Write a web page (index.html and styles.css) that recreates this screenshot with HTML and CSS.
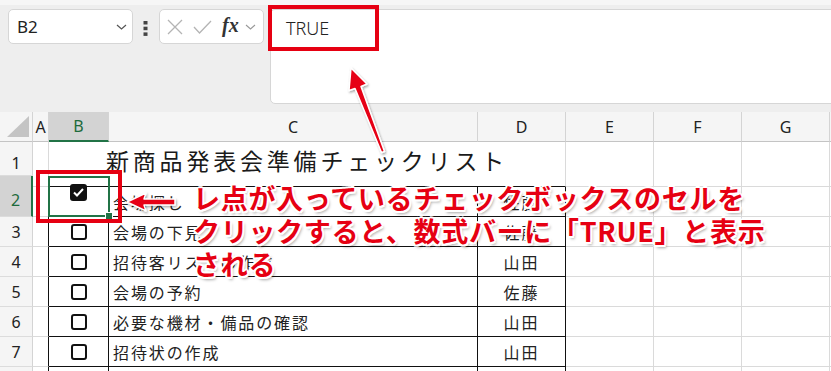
FILE: index.html
```html
<!DOCTYPE html>
<html lang="ja">
<head>
    <meta charset="UTF-8">
    <title>チェックボックス - 数式バー</title>
    <link rel="stylesheet" href="styles.css">
</head>
<body>
<div class="page">
    <div class="toolbar">
        <div class="namebox">
            <span>B2</span>
            <svg class="chev" width="11" height="6" viewBox="0 0 11 6"><path d="M1 1 L5.5 5 L10 1" fill="none" stroke="#555" stroke-width="1.2"/></svg>
        </div>
        <svg class="more" width="5" height="15" viewBox="0 0 5 15"><rect x="0.5" y="0" width="4" height="3.5" fill="#444"/><rect x="0.5" y="5.7" width="4" height="3.5" fill="#444"/><rect x="0.5" y="11.4" width="4" height="3.5" fill="#444"/></svg>
        <div class="fxbox">
            <svg width="16" height="16" viewBox="0 0 16 16"><path d="M1 1 L15 15 M15 1 L1 15" stroke="#b4b4b4" stroke-width="1.3" fill="none"/></svg>
            <svg width="19" height="14" viewBox="0 0 19 14"><path d="M1 7 L6.5 13 L18 1" stroke="#b4b4b4" stroke-width="1.3" fill="none"/></svg>
            <span class="fx">fx</span>
            <svg width="11" height="6" viewBox="0 0 11 6"><path d="M1 1 L5.5 5 L10 1" fill="none" stroke="#999" stroke-width="1.1"/></svg>
        </div>
        <div class="formula">TRUE</div>
    </div>

    <div class="sheet">
        <div class="rowheads">
            <div class="corner">
                <svg width="22" height="21" viewBox="0 0 22 21"><polygon points="22,0 22,21 0,21" fill="#c4c4c4"/></svg>
            </div>
            <div class="rh r1">1</div>
            <div class="rh r2 sel">2</div>
            <div class="rh">3</div>
            <div class="rh">4</div>
            <div class="rh">5</div>
            <div class="rh">6</div>
            <div class="rh">7</div>
            <div class="rh"></div>
        </div>

        <div class="grid">
            <div class="ch">A</div>
            <div class="ch sel">B</div>
            <div class="ch">C</div>
            <div class="ch">D</div>
            <div class="ch">E</div>
            <div class="ch">F</div>
            <div class="ch">G</div>
            <div class="ch"></div>

            <!-- row 1 -->
            <div class="c"></div>
            <div class="c title">新商品発表会準備チェックリスト</div>
            <div class="c"></div>
            <div class="c"></div>
            <div class="c"></div>
            <div class="c"></div>

            <!-- row 2 -->
            <div class="c edge"></div>
            <div class="c t box"><span class="cb on"><svg width="11" height="9" viewBox="0 0 11 9"><path d="M1 4.5 L4 7.5 L10 1" stroke="#fff" stroke-width="2" fill="none"/></svg></span></div>
            <div class="c t txt">会場探し</div>
            <div class="c t name">佐藤</div>
            <div class="c"></div><div class="c"></div><div class="c"></div><div class="c"></div>

            <!-- row 3 -->
            <div class="c edge"></div>
            <div class="c t box"><span class="cb"></span></div>
            <div class="c t txt">会場の下見</div>
            <div class="c t name">佐藤</div>
            <div class="c"></div><div class="c"></div><div class="c"></div><div class="c"></div>

            <!-- row 4 -->
            <div class="c edge"></div>
            <div class="c t box"><span class="cb"></span></div>
            <div class="c t txt">招待客リストの作成</div>
            <div class="c t name">山田</div>
            <div class="c"></div><div class="c"></div><div class="c"></div><div class="c"></div>

            <!-- row 5 -->
            <div class="c edge"></div>
            <div class="c t box"><span class="cb"></span></div>
            <div class="c t txt">会場の予約</div>
            <div class="c t name">佐藤</div>
            <div class="c"></div><div class="c"></div><div class="c"></div><div class="c"></div>

            <!-- row 6 -->
            <div class="c edge"></div>
            <div class="c t box"><span class="cb"></span></div>
            <div class="c t txt">必要な機材・備品の確認</div>
            <div class="c t name">山田</div>
            <div class="c"></div><div class="c"></div><div class="c"></div><div class="c"></div>

            <!-- row 7 -->
            <div class="c edge"></div>
            <div class="c t box"><span class="cb"></span></div>
            <div class="c t txt">招待状の作成</div>
            <div class="c t name">山田</div>
            <div class="c"></div><div class="c"></div><div class="c"></div><div class="c"></div>

            <!-- row 8 -->
            <div class="c edge"></div>
            <div class="c t"></div>
            <div class="c t"></div>
            <div class="c t"></div>
            <div class="c"></div><div class="c"></div><div class="c"></div><div class="c"></div>
        </div>
    </div>

    <!-- overlays -->
    <div class="selbox"><span class="handle"></span></div>
    <div class="redbox rb-formula"></div>
    <div class="redbox rb-cell"></div>

    <svg class="arrows" width="831" height="371" viewBox="0 0 831 371">
        <defs>
            <filter id="sh" x="-20%" y="-20%" width="140%" height="140%">
                <feDropShadow dx="1" dy="1.5" stdDeviation="1" flood-color="#000" flood-opacity="0.35"/>
            </filter>
        </defs>
        <g filter="url(#sh)" fill="#e60012" stroke="#fff" stroke-width="1.5" stroke-linejoin="round">
            <polygon points="127,202 146,193 144,199 175,199 175,205 144,205 146,211"/>
            <polygon points="351,68 367,84 361,86.5 384.5,151.5 381.5,152.5 355,88.5 349,90.5"/>
        </g>
    </svg>

    <div class="note">
        レ点が入っているチェックボックスのセルを<br>
        クリックすると、数式バーに「TRUE」と表示<br>
        される
    </div>
</div>
</body>
</html>
```

FILE: styles.css
```css
body {
    margin: 0;
    font-family: "Noto Sans", "Noto Sans CJK JP", sans-serif;
    color: #222;
}

.page {
    position: relative;
    width: 831px;
    height: 371px;
    overflow: hidden;
    background: #fff;
}

/* formula bar area */
.toolbar {
    height: 112px;
    box-sizing: border-box;
    display: flex;
    align-items: flex-start;
    background: #eeeeee;
    border-top: 5px solid #f6f6f6;
    padding-top: 4px;
}

.namebox {
    margin-left: 8px;
    width: 125px;
    height: 35px;
    box-sizing: border-box;
    background: #fff;
    border: 1px solid #d6d6d6;
    border-radius: 5px;
    display: flex;
    align-items: center;
    justify-content: space-between;
    padding: 0 5px 0 8px;
    font-size: 17px;
    color: #222;
}

.more {
    margin: 12px 11px 0 10px;
}

.fxbox {
    width: 105px;
    height: 35px;
    box-sizing: border-box;
    background: #fff;
    border: 1px solid #d6d6d6;
    border-radius: 5px;
    display: flex;
    align-items: center;
    gap: 10px;
    padding-left: 7px;
}

.fx {
    font-family: "Liberation Serif", serif;
    font-style: italic;
    font-weight: bold;
    font-size: 20px;
    color: #333;
    margin-right: -4px;
    margin-top: -3px;
}

.formula {
    flex: 1;
    margin-left: 6px;
    margin-right: -10px;
    height: 95px;
    box-sizing: border-box;
    background: #fff;
    border: 1px solid #d6d6d6;
    border-radius: 5px;
    padding: 6px 0 0 15px;
    font-size: 18px;
    font-weight: 300;
    color: #222;
}

/* sheet */
.sheet {
    display: flex;
}

.rowheads {
    width: 33px;
    flex: none;
    background: #f5f5f5;
}

.corner {
    height: 30px;
    box-sizing: border-box;
    border-right: 1px solid #d4d4d4;
    border-bottom: 1px solid #c4c4c4;
    display: flex;
    align-items: flex-end;
    justify-content: flex-end;
    padding: 0 3px 4px 0;
}

.rh {
    height: 30px;
    box-sizing: border-box;
    border-right: 1px solid #d4d4d4;
    border-bottom: 1px solid #dcdcdc;
    display: flex;
    align-items: center;
    justify-content: center;
    font-size: 16px;
    color: #222;
}

.rh.r1 {
    height: 34px;
    align-items: flex-end;
    padding-bottom: 1px;
}

.rh.r2 {
    height: 41px;
    align-items: flex-end;
    padding-bottom: 5px;
}

.rh.sel {
    background: #d3d3d3;
    color: #1d6b3c;
    border-right: 2px solid #217346;
}

.grid {
    display: grid;
    grid-template-columns: 16px 60px 369px 88px 88px 88px 88px 40px;
    grid-template-rows: 30px 45px repeat(7, 30px);
}

.ch {
    box-sizing: border-box;
    background: #f5f5f5;
    border-right: 1px solid #d4d4d4;
    border-bottom: 1px solid #c4c4c4;
    display: flex;
    align-items: center;
    justify-content: center;
    font-size: 16px;
    color: #222;
}

.ch.sel {
    background: #d3d3d3;
    color: #1d6b3c;
    border-bottom: 2px solid #217346;
}

.c {
    box-sizing: border-box;
    border-right: 1px solid #dadada;
    border-bottom: 1px solid #dadada;
    display: flex;
    align-items: center;
    font-family: "Noto Sans CJK JP", sans-serif;
    font-size: 16px;
    letter-spacing: 1.9px;
    color: #222;
    white-space: nowrap;
}

.c.edge {
    border-right-color: #111;
}

.c.t {
    border-right-color: #111;
    border-bottom-color: #111;
}

.c.title {
    grid-column: 2 / 5;
    border-right-color: #dadada;
    border-bottom-color: #111;
    padding: 0 0 8px 57px;
    font-size: 23px;
    letter-spacing: 3.8px;
    color: #1a1a1a;
}

.c.box {
    justify-content: center;
}

.c.txt {
    padding-left: 4px;
}

.c.name {
    justify-content: center;
}

.cb {
    width: 16px;
    height: 16px;
    box-sizing: border-box;
    border: 2px solid #111;
    border-radius: 3px;
}

.cb.on {
    width: 17px;
    height: 17px;
    background: #111;
    display: flex;
    align-items: center;
    justify-content: center;
    margin-bottom: 19px;
}

/* overlays */
.selbox {
    position: absolute;
    left: 48px;
    top: 176px;
    width: 62px;
    height: 41px;
    box-sizing: border-box;
    border: 2px solid #217346;
}

.handle {
    position: absolute;
    right: -5px;
    bottom: -5px;
    width: 6px;
    height: 6px;
    background: #217346;
    border: 1px solid #fff;
}

.redbox {
    position: absolute;
    box-sizing: border-box;
    border: 4px solid #e60012;
}

.rb-formula {
    left: 268px;
    top: 5px;
    width: 111px;
    height: 46px;
}

.rb-cell {
    left: 36px;
    top: 170px;
    width: 86px;
    height: 53px;
}

.arrows {
    position: absolute;
    left: 0;
    top: 0;
}

.note {
    position: absolute;
    left: 193px;
    top: 181px;
    font-family: "Noto Sans CJK JP", sans-serif;
    font-weight: 700;
    font-size: 27px;
    line-height: 33px;
    letter-spacing: 0.7px;
    color: #e60012;
    white-space: nowrap;
    text-shadow:
        2px 0 0 #fff, -2px 0 0 #fff, 0 2px 0 #fff, 0 -2px 0 #fff,
        1.5px 1.5px 0 #fff, -1.5px 1.5px 0 #fff, 1.5px -1.5px 0 #fff, -1.5px -1.5px 0 #fff,
        2px 3px 3px rgba(0, 0, 0, 0.35);
}
```
